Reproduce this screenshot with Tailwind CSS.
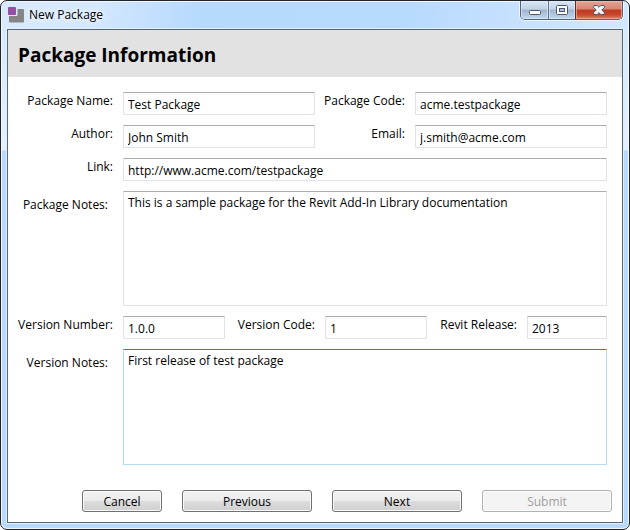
<!DOCTYPE html>
<html lang="en">
<head>
<meta charset="utf-8">
<title>New Package</title>
<script src="https://cdn.jsdelivr.net/npm/@tailwindcss/browser@4"></script>
</head>
<body class="bg-white font-['Open_Sans','Noto_Sans',sans-serif] text-[12px] leading-4 text-black">
<div class="flex min-h-screen flex-col rounded-[7px] border border-[#20242c] bg-[linear-gradient(to_bottom,#d3e7fd_0px,#e4f0fd_149px,#b7d9fd_150px,#b7d9fd_100%)] px-[6px] pb-[6px] shadow-[inset_0_0_0_1px_#f2f9ff]">
  <header class="-mx-[5px] mt-px flex h-[27px] items-start rounded-t-[5px] bg-[linear-gradient(100deg,#d9eafd_0%,#d4e8fe_15%,#b6d9fd_32%,#b8dafe_65%,#c6e1fe_82%,#d3e8fe_100%)] pl-[6px] pr-[5px]">
    <svg class="mt-[5px] h-4 w-4" viewBox="0 0 16 16" aria-hidden="true">
      <path d="M9.500 2h5.500q1 0 1 1v11.500q0 1-1 1H2q-1 0-1-1V9h7.500q1 0 1-1z" fill="#858585"/>
      <rect x="0" y="0" width="8" height="8" rx="1" fill="#9450a2"/>
    </svg>
    <h1 class="ml-[5px] mt-[5px] [text-shadow:0_0_8px_#fff,0_0_5px_#fff]">New Package</h1>
    <div class="-mt-px ml-auto flex h-[19px] overflow-hidden rounded-b-[5px] border border-t-0 border-[#536478] shadow-[0_1px_0_#eef7ff,1px_0_0_#eef7ff,-1px_0_0_#eef7ff]">
      <button type="button" aria-label="Minimize" class="flex w-[28px] items-center justify-center border-r border-[#66768a] bg-[linear-gradient(#d9e7f5_0%,#c0d2e5_45%,#9eb5ce_50%,#c1d8ee_100%)] shadow-[inset_0_0_0_1px_#e3effb99]">
        <svg class="ml-px" width="12" height="18" viewBox="0 0 12 18"><rect x=".5" y="9.500" width="11" height="4" rx="1" fill="#fff" stroke="#535668"/></svg>
      </button>
      <button type="button" aria-label="Maximize" class="flex w-[27px] items-center justify-center border-r border-[#5c2a2a] bg-[linear-gradient(#d9e7f5_0%,#c0d2e5_45%,#9eb5ce_50%,#c1d8ee_100%)] shadow-[inset_0_0_0_1px_#e3effb99]">
        <svg width="12" height="18" viewBox="0 0 12 18"><rect x=".5" y="4.500" width="11" height="9" rx="1" fill="#fff" stroke="#535668"/><rect x="3.500" y="7.500" width="5" height="3" fill="#a9c3dc" stroke="#535668"/></svg>
      </button>
      <button type="button" aria-label="Close" class="flex w-[46px] items-center justify-center bg-[linear-gradient(#e5a596_0%,#d68672_45%,#bd3a22_50%,#c8452b_75%,#dc8165_100%)] shadow-[inset_0_0_0_1px_#f3c5b899]">
        <svg width="12" height="18" viewBox="0 0 12 18"><path d="M1 4.500H4.200L6 6.300 7.800 4.500H11L11.500 6.300 8.800 9 11.500 11.700 11 13.500H7.800L6 11.700 4.200 13.500H1L.5 11.700 3.200 9 .5 6.300z" fill="#f4f4f6" stroke="#535668" stroke-linejoin="round"/></svg>
      </button>
    </div>
  </header>

  <main class="flex flex-1 flex-col border border-[#566675] bg-white shadow-[0_0_0_1px_#e0f0ff]">
    <div class="flex h-[47px] items-center bg-[#e2e2e2] px-[10px] pt-[2px]">
      <h2 class="text-[19px] font-bold leading-6">Package Information</h2>
    </div>
    <form class="flex flex-1 flex-col pt-[15px] pb-[10px]">
      <div class="flex flex-col gap-[10px] pr-[15px]">
        <div class="flex">
          <label for="name" class="w-[115px] shrink-0 pr-[10px] pt-px text-right">Package Name:</label>
          <input id="name" value="Test Package" class="h-[23px] w-0 min-w-0 flex-1 rounded-[1px] border border-[#e2e3ea] border-t-[#abadb3] px-1 pt-px outline-none">
          <label for="code" class="w-[100px] shrink-0 pr-[10px] pt-px text-right">Package Code:</label>
          <input id="code" value="acme.testpackage" class="h-[23px] w-0 min-w-0 flex-1 rounded-[1px] border border-[#e2e3ea] border-t-[#abadb3] px-1 pt-px outline-none">
        </div>
        <div class="flex">
          <label for="author" class="w-[115px] shrink-0 pr-[10px] pt-px text-right">Author:</label>
          <input id="author" value="John Smith" class="h-[23px] w-0 min-w-0 flex-1 rounded-[1px] border border-[#e2e3ea] border-t-[#abadb3] px-1 pt-px outline-none">
          <label for="email" class="w-[100px] shrink-0 pr-[10px] pt-px text-right">Email:</label>
          <input id="email" value="j.smith@acme.com" class="h-[23px] w-0 min-w-0 flex-1 rounded-[1px] border border-[#e2e3ea] border-t-[#abadb3] px-1 pt-px outline-none">
        </div>
        <div class="flex">
          <label for="link" class="w-[115px] shrink-0 pr-[10px] pt-px text-right">Link:</label>
          <input id="link" value="http://www.acme.com/testpackage" class="h-[23px] w-0 min-w-0 flex-1 rounded-[1px] border border-[#e2e3ea] border-t-[#abadb3] px-1 pt-px outline-none">
        </div>
        <div class="flex">
          <label for="pnotes" class="w-[115px] shrink-0 pr-[15px] pt-[6px] text-right">Package Notes:</label>
          <textarea id="pnotes" class="h-[115px] w-0 min-w-0 flex-1 resize-none rounded-[1px] border border-[#e2e3ea] border-t-[#abadb3] px-1 pt-[3px] outline-none">This is a sample package for the Revit Add-In Library documentation</textarea>
        </div>
        <div class="flex">
          <label for="vnum" class="w-[115px] shrink-0 pr-[10px] pt-px text-right">Version Number:</label>
          <input id="vnum" value="1.0.0" class="h-[23px] w-0 min-w-0 flex-1 rounded-[1px] border border-[#e2e3ea] border-t-[#abadb3] px-1 pt-px outline-none">
          <label for="vcode" class="w-[100px] shrink-0 pr-[10px] pt-px text-right">Version Code:</label>
          <input id="vcode" value="1" class="h-[23px] w-0 min-w-0 flex-1 rounded-[1px] border border-[#e2e3ea] border-t-[#abadb3] px-1 pt-px outline-none">
          <label for="revit" class="w-[100px] shrink-0 pr-[10px] pt-px text-right">Revit Release:</label>
          <input id="revit" value="2013" class="h-[23px] w-20 shrink-0 rounded-[1px] border border-[#e2e3ea] border-t-[#abadb3] px-1 pt-px outline-none">
        </div>
        <div class="flex">
          <label for="vnotes" class="w-[115px] shrink-0 pr-[15px] pt-[6px] text-right">Version Notes:</label>
          <textarea id="vnotes" class="h-[116px] w-0 min-w-0 flex-1 resize-none rounded-[1px] border border-[#b5dbee] border-t-[#3d7bad] px-1 pt-[3px] outline-none">First release of test package</textarea>
        </div>
      </div>
      <div class="mt-auto flex justify-end gap-5 pr-[10px]">
        <button type="button" class="h-[22px] w-20 rounded-[3px] border border-[#707070] bg-[linear-gradient(#f2f2f2_0%,#ebebeb_50%,#dddddd_50%,#cfcfcf_100%)] pt-px shadow-[inset_0_0_0_1px_#fafafa]">Cancel</button>
        <button type="button" class="h-[22px] w-[130px] rounded-[3px] border border-[#707070] bg-[linear-gradient(#f2f2f2_0%,#ebebeb_50%,#dddddd_50%,#cfcfcf_100%)] pt-px shadow-[inset_0_0_0_1px_#fafafa]">Previous</button>
        <button type="button" class="h-[22px] w-[130px] rounded-[3px] border border-[#707070] bg-[linear-gradient(#f2f2f2_0%,#ebebeb_50%,#dddddd_50%,#cfcfcf_100%)] pt-px shadow-[inset_0_0_0_1px_#fafafa]">Next</button>
        <button type="submit" disabled class="h-[22px] w-[130px] rounded-[3px] border border-[#adb2b5] bg-[#f4f4f4] pt-px text-[#a0a0a0] shadow-[inset_0_0_0_1px_#fcfcfc]">Submit</button>
      </div>
    </form>
  </main>
</div>
</body>
</html>
